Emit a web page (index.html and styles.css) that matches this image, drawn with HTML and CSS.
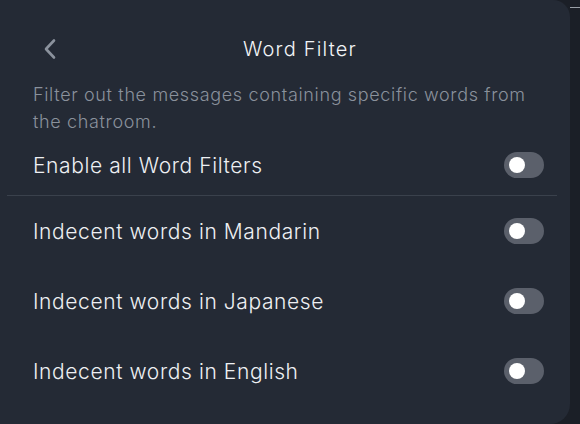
FILE: index.html
```html
<!DOCTYPE html>
<html>
	<head>
	<meta name="viewport" content="width=device-width, initial-scale=1">
	<title>Word Filter</title>
	<link rel="stylesheet" href="styles.css">
	</head>
	<body>
	<div class="panel">
		<div class="header">
			<button class="back" aria-label="Back">
				<svg width="14" height="22" viewBox="0 0 14 22"><polyline points="11,2.5 3,11 11,19.5" fill="none" stroke="#8b929d" stroke-width="2.6" stroke-linecap="round" stroke-linejoin="round"/></svg>
			</button>
			<div class="title">Word Filter</div>
		</div>
		<div class="desc">Filter out the messages containing specific words from the chatroom.</div>
		<div class="row first">
			<span class="label">Enable all Word Filters</span>
			<span class="toggle"><span class="knob"></span></span>
		</div>
		<div class="divider"></div>
		<div class="row">
			<span class="label">Indecent words in Mandarin</span>
			<span class="toggle"><span class="knob"></span></span>
		</div>
		<div class="row">
			<span class="label">Indecent words in Japanese</span>
			<span class="toggle"><span class="knob"></span></span>
		</div>
		<div class="row">
			<span class="label">Indecent words in English</span>
			<span class="toggle"><span class="knob"></span></span>
		</div>
	</div>
	<div class="side">
		<div class="side-line"></div>
	</div>
	</body>
</html>
```
FILE: styles.css
```css
body{
	margin: 0;
	height: 424px;
	display: flex;
	background-color: #1b1f27;
	font-family: "Inter", "Noto Sans", sans-serif;
	font-weight: 300;
	overflow: hidden;
}
.panel{
	width: 570px;
	height: 424px;
	flex: none;
	background-color: #242a35;
	border-radius: 0 17px 20px 0;
}
.header{
	height: 81px;
	box-sizing: border-box;
	padding-top: 16px;
	display: grid;
	grid-template-columns: 60px 1fr 30px;
	align-items: center;
}
.back{
	background: none;
	border: none;
	padding: 0 0 0 43px;
	display: flex;
	cursor: pointer;
}
.title{
	text-align: center;
	color: #f2f4f7;
	font-size: 20px;
	letter-spacing: 1.2px;
}
.desc{
	padding: 0 36px 0 33px;
	color: #8a919c;
	font-size: 18px;
	letter-spacing: 0.65px;
	line-height: 27px;
}
.row{
	height: 70px;
	display: flex;
	align-items: center;
	justify-content: space-between;
	padding: 0 26px 0 33px;
}
.row.first{height: 60px;}
.label{
	color: #eef0f3;
	font-size: 21px;
	letter-spacing: 0.6px;
}
.divider{
	height: 1px;
	margin: 0 13px 0 7px;
	background-color: #3a414c;
}
.toggle{
	width: 40px;
	height: 26px;
	border-radius: 13px;
	background-color: #5b606b;
	display: flex;
	align-items: center;
	padding-left: 5px;
	box-sizing: border-box;
}
.knob{
	width: 16px;
	height: 16px;
	border-radius: 50%;
	background-color: #ffffff;
}
.side{
	flex: 1;
	padding-top: 7px;
}
.side-line{
	height: 1px;
	background-color: #9aa0a8;
}
```
